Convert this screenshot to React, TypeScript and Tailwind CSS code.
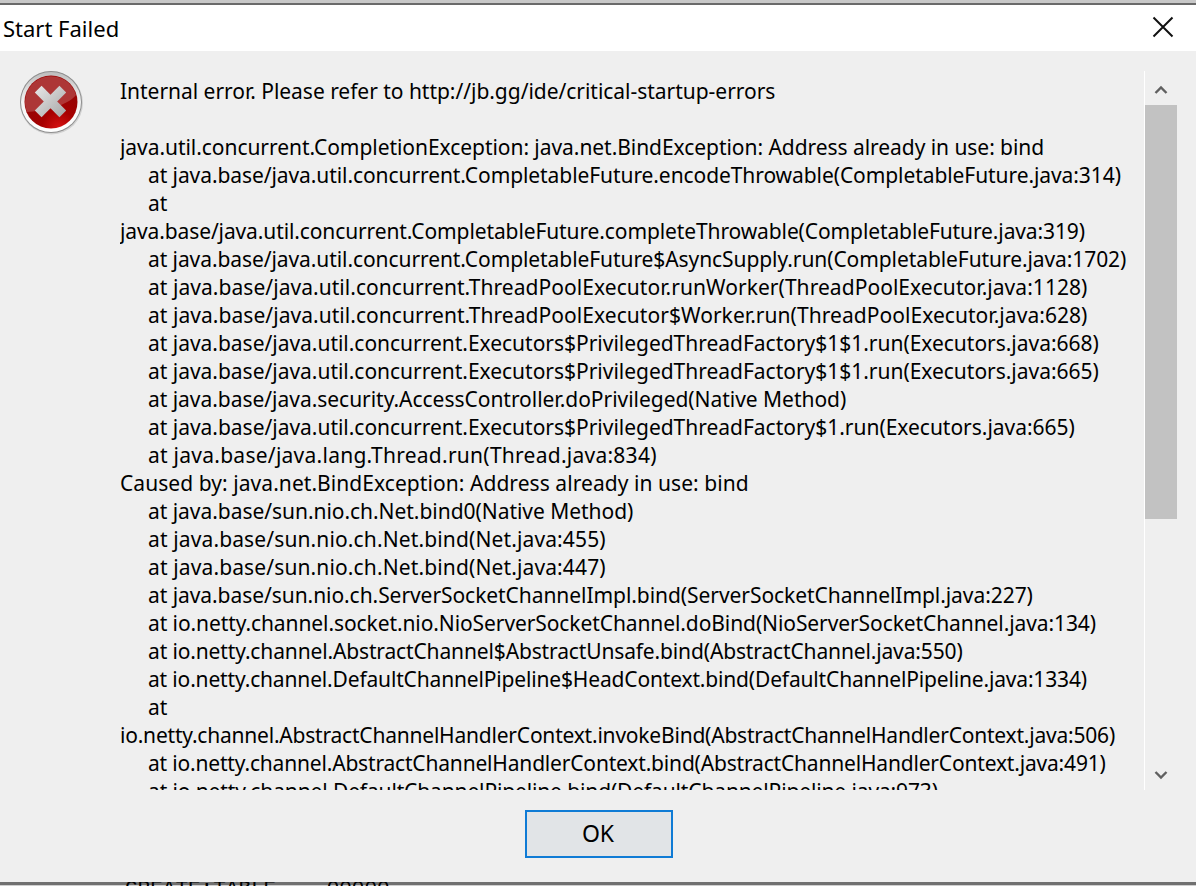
const lines: [string, boolean, string][] = [
  ["java.util.concurrent.CompletionException: java.net.BindException: Address already in use: bind", false, "tracking-[-0.05px]"],
  ["at java.base/java.util.concurrent.CompletableFuture.encodeThrowable(CompletableFuture.java:314)", true, "tracking-[-0.08px]"],
  ["at", true, ""],
  ["java.base/java.util.concurrent.CompletableFuture.completeThrowable(CompletableFuture.java:319)", false, "tracking-[-0.11px]"],
  ["at java.base/java.util.concurrent.CompletableFuture$AsyncSupply.run(CompletableFuture.java:1702)", true, "tracking-[-0.08px]"],
  ["at java.base/java.util.concurrent.ThreadPoolExecutor.runWorker(ThreadPoolExecutor.java:1128)", true, "tracking-[0.05px]"],
  ["at java.base/java.util.concurrent.ThreadPoolExecutor$Worker.run(ThreadPoolExecutor.java:628)", true, "tracking-[0.05px]"],
  ["at java.base/java.util.concurrent.Executors$PrivilegedThreadFactory$1$1.run(Executors.java:668)", true, "tracking-[-0.02px]"],
  ["at java.base/java.util.concurrent.Executors$PrivilegedThreadFactory$1$1.run(Executors.java:665)", true, "tracking-[-0.02px]"],
  ["at java.base/java.security.AccessController.doPrivileged(Native Method)", true, "tracking-[-0.03px]"],
  ["at java.base/java.util.concurrent.Executors$PrivilegedThreadFactory$1.run(Executors.java:665)", true, "tracking-[-0.02px]"],
  ["at java.base/java.lang.Thread.run(Thread.java:834)", true, "tracking-[0.26px]"],
  ["Caused by: java.net.BindException: Address already in use: bind", false, "tracking-[0.06px]"],
  ["at java.base/sun.nio.ch.Net.bind0(Native Method)", true, "tracking-[-0.04px]"],
  ["at java.base/sun.nio.ch.Net.bind(Net.java:455)", true, "tracking-[0.13px]"],
  ["at java.base/sun.nio.ch.Net.bind(Net.java:447)", true, "tracking-[0.13px]"],
  ["at java.base/sun.nio.ch.ServerSocketChannelImpl.bind(ServerSocketChannelImpl.java:227)", true, "tracking-[-0.06px]"],
  ["at io.netty.channel.socket.nio.NioServerSocketChannel.doBind(NioServerSocketChannel.java:134)", true, "tracking-[-0.09px]"],
  ["at io.netty.channel.AbstractChannel$AbstractUnsafe.bind(AbstractChannel.java:550)", true, "tracking-[-0.14px]"],
  ["at io.netty.channel.DefaultChannelPipeline$HeadContext.bind(DefaultChannelPipeline.java:1334)", true, "tracking-[-0.16px]"],
  ["at", true, ""],
  ["io.netty.channel.AbstractChannelHandlerContext.invokeBind(AbstractChannelHandlerContext.java:506)", false, "tracking-[-0.21px]"],
  ["at io.netty.channel.AbstractChannelHandlerContext.bind(AbstractChannelHandlerContext.java:491)", true, "tracking-[-0.18px]"],
  ["at io.netty.channel.DefaultChannelPipeline.bind(DefaultChannelPipeline.java:973)", true, "tracking-[-0.14px]"],
];

function ErrorIcon() {
  return (
    <svg width="64" height="64" viewBox="0 0 64 64" className="ml-[1px]">
      <defs>
        <linearGradient id="ring" x1="0" y1="0" x2="0" y2="1">
          <stop offset="0" stopColor="#bdbdbd" />
          <stop offset="0.5" stopColor="#f4f4f4" />
          <stop offset="1" stopColor="#ffffff" />
        </linearGradient>
        <radialGradient id="red" cx="0.65" cy="1" r="0.6">
          <stop offset="0" stopColor="#d81212" />
          <stop offset="0.55" stopColor="#a60000" />
          <stop offset="1" stopColor="#990404" />
        </radialGradient>
        <linearGradient id="cross" gradientUnits="userSpaceOnUse" x1="15" y1="15" x2="46" y2="46">
          <stop offset="0" stopColor="#e8e8e8" />
          <stop offset="1" stopColor="#a6a6a6" />
        </linearGradient>
      </defs>
      <circle cx="31.5" cy="32" r="31.5" fill="#000" opacity="0.12" />
      <circle cx="31" cy="31" r="31" fill="#8e8e8e" />
      <circle cx="31" cy="31" r="30" fill="url(#ring)" />
      <circle cx="31" cy="31" r="26.5" fill="url(#red)" />
      <path d="M5 31 A26 26 0 0 1 56 24 C46 36 22 40 7 41 C5.6 37 5 34 5 31 Z" fill="#ffffff" opacity="0.2" />
      <g stroke="url(#cross)" strokeWidth="9.5" fill="none">
        <path d="M18.2 18.2 L42.8 42.8" />
        <path d="M42.8 18.2 L18.2 42.8" />
      </g>
    </svg>
  );
}

export default function App() {
  return (
    <div className="relative h-[886px] w-[1196px] overflow-hidden bg-white font-['Noto_Sans',sans-serif] text-black">
      <div className="h-[3px] bg-[#c8c8c8]" />
      <div className="h-[2px] bg-[#6a6a6a]" />
      <div className="flex h-[46px] items-center justify-between bg-white pl-[3px] pr-[22px]">
        <span className="text-[22px]">Start Failed</span>
        <svg width="22" height="22" viewBox="0 0 22 22" className="mb-[3px]">
          <path d="M1.5 1.5 L20.5 20.5 M20.5 1.5 L1.5 20.5" stroke="#111" strokeWidth="2" />
        </svg>
      </div>
      <div className="flex h-[831px] flex-col bg-[#efefef]">
        <div className="mt-5 flex h-[719px] pl-[19px]">
          <div className="w-[101px] shrink-0">
            <ErrorIcon />
          </div>
          <div className="w-[1024px] shrink-0 overflow-hidden text-[21px] leading-[28px]">
            <div className="pt-[6px] tracking-[-0.03px]">Internal error. Please refer to http://jb.gg/ide/critical-startup-errors</div>
            <div className="h-[28px]" />
            {lines.map(([text, indented, tracking], i) => (
              <div key={i} className={`whitespace-nowrap ${indented ? "pl-7" : ""} ${tracking}`}>
                {text}
              </div>
            ))}
          </div>
          <div className="flex w-[33px] shrink-0 flex-col border-l border-white">
            <div className="flex h-[34px] w-[32px] items-center justify-center pt-[3px]">
              <svg width="14" height="10" viewBox="0 0 14 10">
                <path d="M1.5 8 L7 2.5 L12.5 8" fill="none" stroke="#606060" strokeWidth="2.4" />
              </svg>
            </div>
            <div className="h-[414px] w-[32px] bg-[#c2c2c2]" />
            <div className="flex w-[32px] flex-1 items-end justify-center pb-[10px]">
              <svg width="14" height="10" viewBox="0 0 14 10">
                <path d="M1.5 2 L7 7.5 L12.5 2" fill="none" stroke="#606060" strokeWidth="2.4" />
              </svg>
            </div>
          </div>
        </div>
        <div className="flex flex-1 items-start justify-center pt-[20px] pl-[2px]">
          <button className="h-[48px] w-[148px] border-2 border-[#0f7bd5] bg-[#e1e4e7] pb-[2px] pr-[2px] text-[23px]">OK</button>
        </div>
      </div>
      <div className="h-[4px] overflow-hidden border-t-[3px] border-[#707070] bg-[#cfcfcf]" />
      <div className="absolute bottom-0 left-[125px] h-[4px] overflow-hidden font-['Liberation_Mono',monospace] text-[21px] leading-[28px]">
        <div className="-mt-[7px] whitespace-pre">CREATE:TABLE    00000</div>
      </div>
    </div>
  );
}
